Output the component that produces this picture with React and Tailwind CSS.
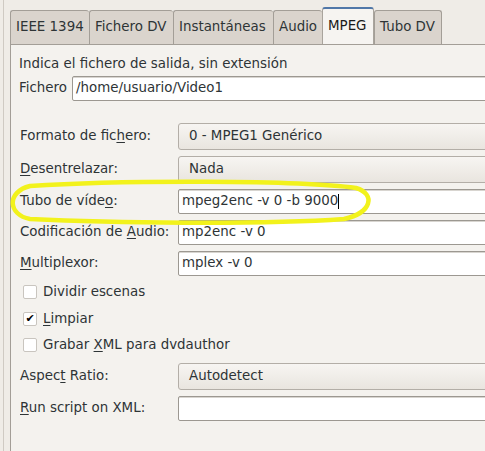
import React from 'react';

const tabs = [
    { t: 'IEEE 1394', w: 'w-[79px]' },
    { t: 'Fichero DV', w: 'w-[84px]' },
    { t: 'Instantáneas', w: 'w-[100px]' },
    { t: 'Audio', w: 'w-[49px]' },
    { t: 'MPEG', w: 'w-[52px]' },
    { t: 'Tubo DV', w: 'w-[68px]' },
];

const U = ({ children }) => <span className="underline underline-offset-2">{children}</span>;

const Combo = ({ value }) => (
    <div className="h-[27px] flex items-center pl-[10px] rounded-[3px] border border-[#b3aea7] bg-gradient-to-b from-[#f7f5f2] to-[#e9e5df] text-[#2e3436]">
        {value}
    </div>
);

const Entry = ({ value, caret }) => (
    <div className="h-[25px] flex items-center pl-[3px] rounded-[2px] border border-[#9c9891] bg-white text-[#2e3436] shadow-[inset_0_1px_0_#d8d5d0]">
        {value}
        {caret && <span className="inline-block w-px h-[15px] bg-black" />}
    </div>
);

const Check = ({ checked, children }) => (
    <div className="flex items-center gap-[6px] h-[26.5px] pl-[12px]">
        <div className="w-[14px] h-[14px] rounded-[2px] border border-[#c9c5bf] bg-white flex items-center justify-center text-[11px] leading-none text-black">
            {checked ? '✔' : ''}
        </div>
        <span>{children}</span>
    </div>
);

const rows1 = [
    { label: <>Formato de fic<U>h</U>ero:</>, field: <Combo value="0 - MPEG1 Genérico" /> },
    { label: <><U>D</U>esentrelazar:</>, field: <Combo value="Nada" /> },
    { label: <>Tubo de víde<U>o</U>:</>, field: <Entry value="mpeg2enc -v 0 -b 9000" caret /> },
    { label: <>Codificación de <U>A</U>udio:</>, field: <Entry value="mp2enc -v 0" /> },
    { label: <><U>M</U>ultiplexor:</>, field: <Entry value="mplex -v 0" /> },
];

export default function App() {
    return (
        <div className="relative w-[485px] h-[451px] overflow-hidden bg-[#efece7] text-[13.4px] text-[#2e3436]" style={{ fontFamily: '"DejaVu Sans", sans-serif' }}>
            <div className="flex h-full">
                <div className="w-[10px] shrink-0 flex">
                    <div className="w-[3px]" />
                    <div className="w-px bg-[#cfcac3]" />
                </div>
                <div className="flex-1 flex flex-col min-w-0">
                    {/* tabs */}
                    <div className="flex items-end h-[44px]">
                        {tabs.map(({ t, w }) =>
                            t === 'MPEG' ? (
                                <div key={t} className={`${w} shrink-0 h-[37px] pl-[5px] flex items-center bg-[#f6f4f1] border border-b-0 border-[#a9a49d] rounded-t-[3px] border-t-2 border-t-[#5077a8] text-[#1a1a1a]`}>
                                    {t}
                                </div>
                            ) : (
                                <div key={t} className={`${w} shrink-0 h-[34px] pl-[5px] flex items-center bg-[#dad4cd] border border-b-0 border-r-0 border-[#a39e97] rounded-t-[3px] text-[#2e3436] last:border-r`}>
                                    {t}
                                </div>
                            )
                        )}
                    </div>
                    {/* page */}
                    <div className="flex-1 bg-[#f4f2ee] border-l border-t border-[#a39e97] w-[490px] pt-[8px]">
                        <div className="pl-[8px] h-[22px] flex items-center">Indica el fichero de salida, sin extensión</div>
                        <div className="flex items-center h-[26px] pl-[8px] gap-[5px]">
                            <span>Fichero</span>
                            <div className="flex-1"><Entry value="/home/usuario/Video1" /></div>
                        </div>
                        <div className="h-[22px]" />
                        <div className="flex flex-col gap-[6px]">
                            {rows1.map((r, i) => (
                                <div key={i} className="grid grid-cols-[167px_1fr] items-center">
                                    <div className="pl-[9px]">{r.label}</div>
                                    {r.field}
                                </div>
                            ))}
                        </div>
                        <div className="mt-[3px]">
                            <Check>Dividir escenas</Check>
                            <Check checked><U>L</U>impiar</Check>
                            <Check>Grabar <U>X</U>ML para dvdauthor</Check>
                        </div>
                        <div className="flex flex-col gap-[6px] mt-[4px]">
                            <div className="grid grid-cols-[167px_1fr] items-center">
                                <div className="pl-[9px]">Aspec<U>t</U> Ratio:</div>
                                <Combo value="Autodetect" />
                            </div>
                            <div className="grid grid-cols-[167px_1fr] items-center">
                                <div className="pl-[9px]"><U>R</U>un script on XML:</div>
                                <Entry value="" />
                            </div>
                        </div>
                    </div>
                </div>
            </div>
            {/* yellow hand-drawn highlight */}
            <svg className="absolute left-0 top-0 pointer-events-none" width="485" height="451">
                <path d="M30 186 C 120 180, 300 180, 356 188 C 376 194, 372 213, 344 219 C 260 225, 110 223, 30 219 C 8 215, 6 192, 30 186 Z" fill="none" stroke="#f2f21c" strokeWidth="4.5" strokeLinecap="round" />
            </svg>
        </div>
    );
}
